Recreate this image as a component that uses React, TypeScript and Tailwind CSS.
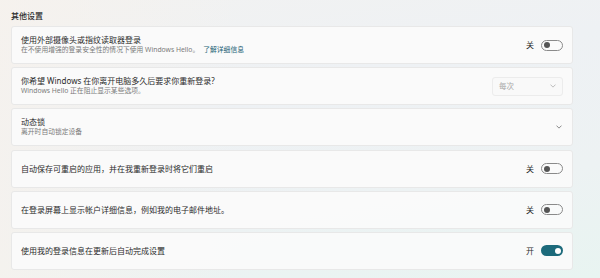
import React from "react";

const font = { fontFamily: '"Noto Sans", "Noto Sans CJK SC", sans-serif' };

function Toggle({ on }: { on: boolean }) {
  return on ? (
    <div className="w-[22px] h-[11px] rounded-full bg-[#1c6a7b] flex items-center justify-end pr-[2px]">
      <div className="w-[6px] h-[6px] rounded-full bg-white" />
    </div>
  ) : (
    <div className="w-[22px] h-[11px] rounded-full border border-[#8a8a8a] flex items-center pl-[2px]">
      <div className="w-[6px] h-[6px] rounded-full bg-[#555555]" />
    </div>
  );
}

function Chevron() {
  return (
    <svg width="6" height="4" viewBox="0 0 8 5" fill="none">
      <path d="M1 1l3 3 3-3" stroke="#666" strokeWidth="1" strokeLinecap="round" strokeLinejoin="round" />
    </svg>
  );
}

function Card({ children, right }: { children: React.ReactNode; right?: React.ReactNode }) {
  return (
    <div className="h-[38px] rounded-[3px] border border-[#e8e8e8] bg-[#fbfbfb]/90 flex items-center justify-between pl-[9px] pr-[9px]">
      <div className="flex flex-col justify-center">{children}</div>
      {right}
    </div>
  );
}

function ToggleRight({ on }: { on: boolean }) {
  return (
    <div className="flex items-center gap-[7px]">
      <span className="text-[8px] text-[#2b2b2b]">{on ? "开" : "关"}</span>
      <Toggle on={on} />
    </div>
  );
}

export default function App() {
  return (
    <div
      style={font}
      className="w-[600px] h-[278px] overflow-hidden bg-[linear-gradient(170deg,#f2f2f1_0%,#eef1f4_35%,#edf2f3_70%,#e8f4f1_100%)]"
    >
      <div className="w-[600px] h-[278px] bg-[linear-gradient(90deg,rgba(247,242,236,0.7)_0%,rgba(247,242,236,0)_40%)]">
        <div className="pl-[11px] pr-[27px] pt-[10px]">
          <div className="text-[8px] leading-[12px] text-[#2b2b2b] font-medium mb-[4px]">其他设置</div>
          <div className="flex flex-col gap-[3.2px]">
            <Card right={<ToggleRight on={false} />}>
              <div className="text-[8px] leading-[10px] text-[#2b2b2b]">使用外部摄像头或指纹读取器登录</div>
              <div className="text-[6.8px] leading-[10px] text-[#7a7a7a]">
                在不使用增强的登录安全性的情况下使用 Windows Hello。
                <span className="text-[#1b5f75] ml-[4px]">了解详细信息</span>
              </div>
            </Card>
            <Card
              right={
                <div className="w-[71px] h-[19px] rounded-[3px] border border-[#ececec] bg-[#f9f9f9] flex items-center justify-between pl-[6px] pr-[6px]">
                  <span className="text-[7.5px] text-[#a8a8a8]">每次</span>
                  <svg width="6" height="4" viewBox="0 0 8 5" fill="none">
                    <path d="M1 1l3 3 3-3" stroke="#aaa" strokeWidth="1" strokeLinecap="round" strokeLinejoin="round" />
                  </svg>
                </div>
              }
            >
              <div className="text-[8px] leading-[10px] text-[#2b2b2b]">你希望 Windows 在你离开电脑多久后要求你重新登录?</div>
              <div className="text-[6.8px] leading-[10px] text-[#7a7a7a]">Windows Hello 正在阻止显示某些选项。</div>
            </Card>
            <Card right={<div className="pr-[1px]"><Chevron /></div>}>
              <div className="text-[8px] leading-[10px] text-[#2b2b2b]">动态锁</div>
              <div className="text-[6.8px] leading-[10px] text-[#7a7a7a]">离开时自动锁定设备</div>
            </Card>
            <Card right={<ToggleRight on={false} />}>
              <div className="text-[8px] leading-[10px] text-[#2b2b2b]">自动保存可重启的应用，并在我重新登录时将它们重启</div>
            </Card>
            <Card right={<ToggleRight on={false} />}>
              <div className="text-[8px] leading-[10px] text-[#2b2b2b]">在登录屏幕上显示帐户详细信息，例如我的电子邮件地址。</div>
            </Card>
            <Card right={<ToggleRight on={true} />}>
              <div className="text-[8px] leading-[10px] text-[#2b2b2b]">使用我的登录信息在更新后自动完成设置</div>
            </Card>
          </div>
        </div>
      </div>
    </div>
  );
}
